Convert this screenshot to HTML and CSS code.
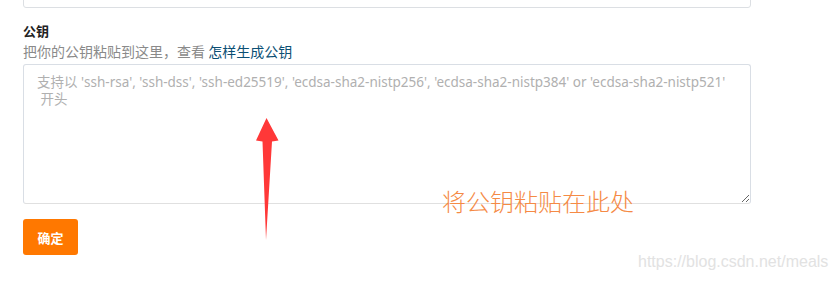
FILE: index.html
```html
<!DOCTYPE html>
<html lang="zh-CN">
<head>
<meta charset="utf-8">
<title>公钥</title>
<link rel="stylesheet" href="styles.css">
</head>
<body>
<div class="page">
  <div class="prev-field"><input class="text-input" type="text"></div>
  <div class="field">
    <label class="field-label" for="key">公钥</label>
    <p class="field-help">把你的公钥粘贴到这里，查看 <a class="help-link" href="#">怎样生成公钥</a></p>
    <textarea id="key" class="key-area" placeholder="支持以 'ssh-rsa', 'ssh-dss', 'ssh-ed25519', 'ecdsa-sha2-nistp256', 'ecdsa-sha2-nistp384' or 'ecdsa-sha2-nistp521'&#10; 开头"></textarea>
  </div>
  <button class="submit-btn" type="button">确定</button>

  <svg class="note-arrow" width="30" height="130" viewBox="250 114 30 130" aria-hidden="true">
    <polygon points="266.5,118 278.5,140.5 272,141.5 266,240 262.5,141.5 256,140.5" fill="#ff3838"/>
  </svg>
  <div class="note-text">将公钥粘贴在此处</div>
  <div class="watermark">https://blog.csdn.net/meals</div>
</div>
</body>
</html>
```

FILE: styles.css
```css
* { box-sizing: border-box; }
html, body { margin: 0; padding: 0; background: #fff; }
body {
  font-family: "Noto Sans", "Noto Sans CJK SC", sans-serif;
  font-size: 14px;
  color: #333;
  overflow: hidden;
}
.page {
  position: relative;
  display: flow-root;
  width: 835px;
  height: 281px;
  padding-left: 23px;
}
.prev-field {
  margin-top: -30px;
  width: 728px;
}
.text-input {
  display: block;
  width: 100%;
  height: 38px;
  border: 1px solid #dcdfe3;
  border-radius: 3px;
  background: #fff;
  outline: none;
}
.field {
  width: 728px;
  margin-top: 13px;
}
.field-label {
  display: block;
  font-family: "Noto Sans CJK SC", sans-serif;
  font-weight: bold;
  font-size: 13px;
  line-height: 20px;
  color: #222;
}
.field-help {
  margin: 0 0 3px;
  font-family: "Noto Sans CJK SC", sans-serif;
  font-size: 14px;
  line-height: 20px;
  color: #8a8a8a;
}
.help-link {
  color: #0b4f74;
  text-decoration: none;
}
.key-area {
  display: block;
  width: 728px;
  height: 140px;
  margin: 0;
  padding: 9px 13px;
  border: 1px solid #d9dee5;
  border-bottom-color: #e0e0e0;
  border-radius: 3px;
  font-family: "Noto Sans", "Noto Sans CJK SC", sans-serif;
  font-size: 13.5px;
  line-height: 17px;
  color: #333;
  outline: none;
}
.key-area::placeholder {
  color: #b0b0b0;
}
.submit-btn {
  display: block;
  margin-top: 15px;
  width: 55px;
  height: 36px;
  padding: 0;
  border: none;
  border-radius: 3px;
  background: #ff7800;
  color: #fff;
  font-family: "Noto Sans CJK SC", sans-serif;
  font-size: 13px;
  font-weight: bold;
}
.note-arrow {
  position: absolute;
  left: 250px;
  top: 114px;
}
.note-text {
  position: absolute;
  left: 442px;
  top: 186px;
  font-family: "Noto Sans CJK SC", sans-serif;
  font-weight: 300;
  font-size: 24px;
  line-height: 30px;
  color: #f58a45;
  white-space: nowrap;
}
.watermark {
  position: absolute;
  left: 638px;
  top: 252px;
  font-family: "Liberation Sans", Arial, sans-serif;
  font-size: 16px;
  line-height: 20px;
  color: #e2e2e2;
  white-space: nowrap;
}
```
